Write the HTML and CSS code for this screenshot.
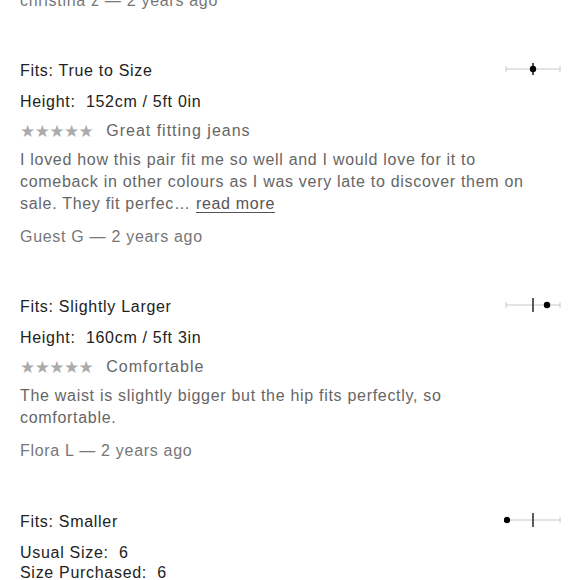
FILE: index.html
```html
<!DOCTYPE html>
<html>
<head>
<meta charset="utf-8">
<link rel="stylesheet" href="styles.css">
</head>
<body>
<div class="page">
  <div class="review first">
    <div class="author">christina z — 2 years ago</div>
  </div>

  <div class="review">
    <div class="fit-row">
      <div class="label">Fits: True to Size</div>
      <svg class="gauge" width="58" height="22" viewBox="0 0 58 22">
        <line x1="2" y1="9" x2="56" y2="9" stroke="#c8c8c8" stroke-width="1"/>
        <line x1="2" y1="6" x2="2" y2="12" stroke="#c8c8c8" stroke-width="1"/>
        <line x1="56" y1="6" x2="56" y2="12" stroke="#c8c8c8" stroke-width="1"/>
        <line x1="29" y1="3" x2="29" y2="15" stroke="#222" stroke-width="1.6"/>
        <circle cx="29" cy="9" r="3.2" fill="#000"/>
      </svg>
    </div>
    <div class="meta">Height:&nbsp; 152cm / 5ft 0in</div>
    <div class="rating"><span class="stars">★★★★★</span><span class="title">Great fitting jeans</span></div>
    <p class="body">I loved how this pair fit me so well and I would love for it to<br>comeback in other colours as I was very late to discover them on<br>sale. They fit perfec… <a class="more" href="#">read more</a></p>
    <div class="author">Guest G — 2 years ago</div>
  </div>

  <div class="review">
    <div class="fit-row">
      <div class="label">Fits: Slightly Larger</div>
      <svg class="gauge" width="58" height="22" viewBox="0 0 58 22">
        <line x1="2" y1="9" x2="56" y2="9" stroke="#c8c8c8" stroke-width="1"/>
        <line x1="2" y1="6" x2="2" y2="12" stroke="#c8c8c8" stroke-width="1"/>
        <line x1="56" y1="6" x2="56" y2="12" stroke="#c8c8c8" stroke-width="1"/>
        <line x1="29" y1="2" x2="29" y2="16" stroke="#333" stroke-width="1.6"/>
        <circle cx="43" cy="9" r="3.2" fill="#000"/>
      </svg>
    </div>
    <div class="meta">Height:&nbsp; 160cm / 5ft 3in</div>
    <div class="rating"><span class="stars">★★★★★</span><span class="title">Comfortable</span></div>
    <p class="body">The waist is slightly bigger but the hip fits perfectly, so<br>comfortable.</p>
    <div class="author">Flora L — 2 years ago</div>
  </div>

  <div class="review last">
    <div class="fit-row">
      <div class="label">Fits: Smaller</div>
      <svg class="gauge" width="58" height="22" viewBox="0 0 58 22">
        <line x1="2" y1="9" x2="56" y2="9" stroke="#c8c8c8" stroke-width="1"/>
        <line x1="2" y1="6" x2="2" y2="12" stroke="#c8c8c8" stroke-width="1"/>
        <line x1="56" y1="6" x2="56" y2="12" stroke="#c8c8c8" stroke-width="1"/>
        <line x1="29" y1="2" x2="29" y2="16" stroke="#333" stroke-width="1.6"/>
        <circle cx="3" cy="9" r="3.2" fill="#000"/>
      </svg>
    </div>
    <div class="sizes">
      <div>Usual Size:&nbsp; 6</div>
      <div>Size Purchased:&nbsp; 6</div>
    </div>
  </div>
</div>
</body>
</html>
```

FILE: styles.css
```css
html, body {
  margin: 0;
  padding: 0;
  background: #fff;
}
body {
  font-family: "Liberation Sans", Arial, sans-serif;
  font-size: 16px;
  letter-spacing: 0.7px;
  overflow: hidden;
  height: 580px;
}
.page {
  padding: 0 20px;
}
.review {
  margin-top: 48px;
}
.review.first {
  margin-top: -10px;
}
.review.last {
  margin-top: 49px;
}
.fit-row {
  display: flex;
  justify-content: space-between;
  align-items: flex-start;
  line-height: 22px;
}
.label {
  color: #222;
}
.gauge {
  display: block;
  margin-right: -2px;
}
.meta {
  color: #222;
  line-height: 22px;
  margin-top: 9px;
}
.rating {
  display: flex;
  align-items: center;
  line-height: 22px;
  margin-top: 7px;
}
.stars {
  color: #ababab;
  font-family: "DejaVu Sans", sans-serif;
  font-size: 17px;
  letter-spacing: -0.6px;
  margin-right: 13px;
}
.title {
  color: #666;
  letter-spacing: 1px;
}
.body {
  margin: 7px 0 0;
  color: #666;
  line-height: 22px;
  white-space: nowrap;
}
.more {
  color: #555;
  text-decoration: underline;
  text-underline-offset: 3px;
}
.author {
  color: #777;
  line-height: 22px;
  margin-top: 11px;
}
.review.first .author {
  margin-top: 0;
}
.sizes {
  color: #222;
  line-height: 20px;
  margin-top: 10px;
}
```
